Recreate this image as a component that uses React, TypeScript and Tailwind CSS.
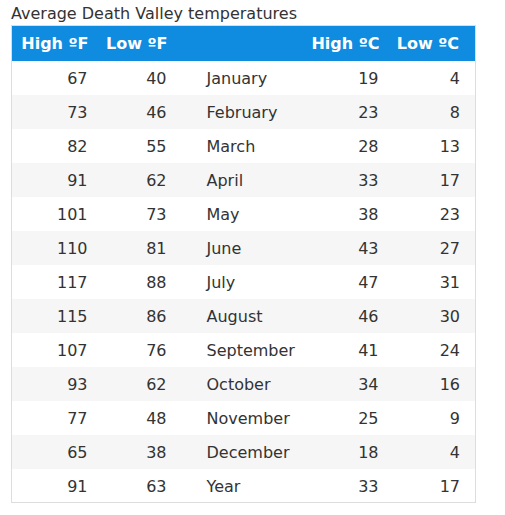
import React from 'react';

const rows: [number, number, string, number, number][] = [
  [67, 40, 'January', 19, 4],
  [73, 46, 'February', 23, 8],
  [82, 55, 'March', 28, 13],
  [91, 62, 'April', 33, 17],
  [101, 73, 'May', 38, 23],
  [110, 81, 'June', 43, 27],
  [117, 88, 'July', 47, 31],
  [115, 86, 'August', 46, 30],
  [107, 76, 'September', 41, 24],
  [93, 62, 'October', 34, 16],
  [77, 48, 'November', 25, 9],
  [65, 38, 'December', 18, 4],
  [91, 63, 'Year', 33, 17],
];

const App: React.FC = () => {
  return (
    <div className="bg-white w-[505px] h-[515px] pl-[11px] pt-[3px] text-[#333] font-['DejaVu_Sans',sans-serif]">
      <div className="text-[16px] leading-[22px] text-[#333]">Average Death Valley temperatures</div>
      <table className="border border-[#ddd] border-collapse w-[464px] table-fixed text-[16px]">
        <colgroup>
          <col className="w-[86px]" />
          <col className="w-[79px]" />
          <col className="w-[127px]" />
          <col className="w-[86px]" />
          <col className="w-[86px]" />
        </colgroup>
        <thead>
          <tr className="bg-[#0f8ce0] text-white h-[35px]">
            <th className="text-right font-bold pr-[9px] pt-[2px]">High ºF</th>
            <th className="text-right font-bold pr-[9px] pt-[2px]">Low ºF</th>
            <th></th>
            <th className="text-right font-bold pr-[10px] pt-[2px]">High ºC</th>
            <th className="text-right font-bold pr-[16px] pt-[2px]">Low ºC</th>
          </tr>
        </thead>
        <tbody>
          {rows.map((r, i) => (
            <tr key={r[2]} className={`h-[34px] ${i % 2 === 1 ? 'bg-[#f6f6f6]' : 'bg-white'}`}>
              <td className="text-right pr-[10px] pt-[3px]">{r[0]}</td>
              <td className="text-right pr-[10px] pt-[3px]">{r[1]}</td>
              <td className="pl-[30px] pt-[3px]">{r[2]}</td>
              <td className="text-right pr-[11px] pt-[3px]">{r[3]}</td>
              <td className="text-right pr-[15px] pt-[3px]">{r[4]}</td>
            </tr>
          ))}
        </tbody>
      </table>
    </div>
  );
};

export default App;
